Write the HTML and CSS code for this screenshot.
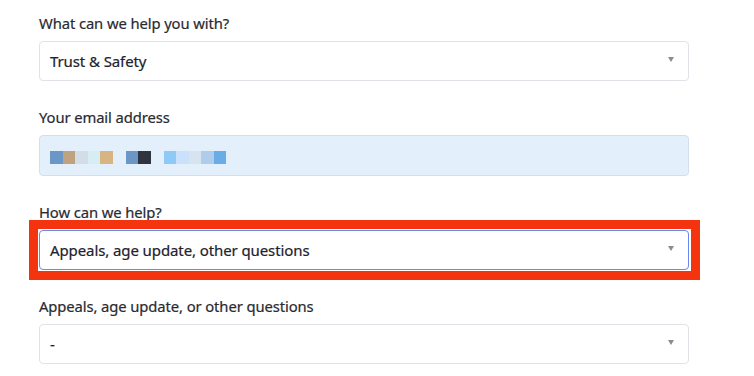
FILE: index.html
```html
<!DOCTYPE html>
<html lang="en">
<head>
<meta charset="utf-8">
<title>Request form</title>
<link rel="stylesheet" href="styles.css">
</head>
<body>
<form class="form">
  <div class="field">
    <label class="label">What can we help you with?</label>
    <div class="control select">
      <span class="value">Trust &amp; Safety</span>
      <span class="arrow"></span>
    </div>
  </div>
  <div class="field">
    <label class="label">Your email address</label>
    <div class="control email">
      <span class="pix">
        <i class="p c1"></i><i class="p c2"></i><i class="p c3"></i><i class="p c4"></i><i class="p c5"></i>
        <i class="gap"></i>
        <i class="p c1"></i><i class="p c6"></i>
        <i class="gap"></i>
        <i class="p c7"></i><i class="p c8"></i><i class="p c9"></i><i class="p c10"></i><i class="p c11"></i>
      </span>
    </div>
  </div>
  <div class="field">
    <label class="label">How can we help?</label>
    <div class="highlight">
      <div class="control select focus">
        <span class="value">Appeals, age update, other questions</span>
        <span class="arrow"></span>
      </div>
      <span class="redbox"></span>
    </div>
  </div>
  <div class="field">
    <label class="label">Appeals, age update, or other questions</label>
    <div class="control select">
      <span class="value">-</span>
      <span class="arrow"></span>
    </div>
  </div>
</form>
</body>
</html>
```

FILE: styles.css
```css
* { box-sizing: border-box; }
html, body { margin: 0; padding: 0; background: #ffffff; }
body {
  font-family: "Noto Sans", "Open Sans", sans-serif;
  color: #26262e;
}
.form {
  display: flex;
  flex-direction: column;
  gap: 26px;
  width: 650px;
  margin-left: 39px;
  padding-top: 13px;
}
.field {
  display: flex;
  flex-direction: column;
  gap: 8px;
}
.label {
  display: block;
  font-size: 14.8px;
  line-height: 20px;
  color: #2a2a31;
  letter-spacing: -0.1px;
  -webkit-text-stroke: 0.2px #2a2a31;
}
.control {
  height: 40px;
  border: 1px solid #dfe3e7;
  border-radius: 4px;
  background: #fff;
  display: flex;
  align-items: center;
  padding: 0 10px;
}
.value {
  flex: 1;
  font-size: 15px;
  color: #22222c;
  letter-spacing: -0.1px;
  -webkit-text-stroke: 0.2px #22222c;
}
.arrow {
  width: 0;
  height: 0;
  border-left: 3px solid transparent;
  border-right: 3px solid transparent;
  border-top: 5px solid #8c8c88;
  margin-right: 4px;
  margin-top: -3px;
}
.email {
  background: #e4effc;
  border-color: #d3dfeb;
  height: 41px;
}
.pix { display: flex; align-items: center; padding-top: 3px; }
.pix i { display: block; height: 13px; }
.pix .p { width: 12.5px; }
.pix .gap { width: 13px; }
.c1 { background: #6b97c6; }
.c2 { background: #bfa27f; }
.c3 { background: #d3dde8; }
.c4 { background: #d6eef3; }
.c5 { background: #d8b482; }
.c6 { background: #30343f; }
.c7 { background: #8fc9f8; }
.c8 { background: #c9e1fa; }
.c9 { background: #d7e3ef; }
.c10 { background: #afcdeb; }
.c11 { background: #69ade6; }
.highlight { position: relative; }
.focus { border-color: #6a86f0; }
.redbox {
  position: absolute;
  top: -10px;
  left: -10px;
  right: -11px;
  bottom: -10px;
  border: 9px solid #f4330f;
  pointer-events: none;
}
```
